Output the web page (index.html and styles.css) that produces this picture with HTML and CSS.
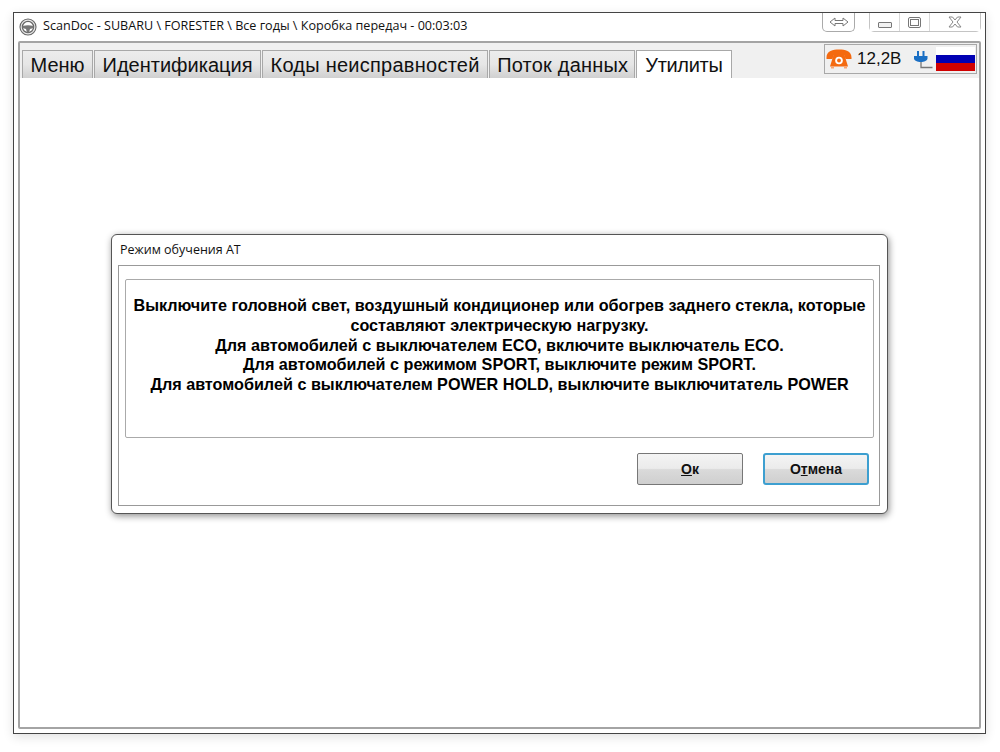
FILE: index.html
```
<!DOCTYPE html>
<html lang="ru">
<head>
<meta charset="utf-8">
<title>ScanDoc</title>
<link rel="stylesheet" href="styles.css">
</head>
<body>
<div class="window">
  <div class="titlebar">
    <svg class="app-icon" width="18" height="18" viewBox="0 0 18 18" fill="none">
      <circle cx="9" cy="9" r="8" stroke="#666" stroke-width="1.100" fill="#e8e8e8"/>
      <circle cx="9" cy="9" r="5.600" stroke="#666" stroke-width="1.300" fill="#fff"/>
      <path d="M3.500 8 Q9 6.300 14.500 8 L14.500 10 L11 11 L10 14.500 H8 L7 11 L3.500 10 Z" fill="#777"/>
    </svg>
    <span class="title-text">ScanDoc - SUBARU \ FORESTER \ Все годы \ Коробка передач - 00:03:03</span>
    <div class="caption-group">
      <button class="cap cap-resize" aria-label="resize">
        <svg width="20" height="12" viewBox="0 0 20 12" fill="none" stroke="#777" stroke-width="1">
          <path d="M1 6 L6 2 V4.500 H14 V2 L19 6 L14 10 V7.500 H6 V10 Z" fill="#fff"/>
        </svg>
      </button>
      <div class="cap-set">
        <button class="cap-btn cap-min" aria-label="minimize"><span class="min-glyph"></span></button>
        <button class="cap-btn cap-max" aria-label="maximize"><span class="max-glyph"></span></button>
        <button class="cap-btn cap-close" aria-label="close">
          <svg width="14" height="12" viewBox="0 0 14 12" fill="#fff" stroke="#888" stroke-width="1">
            <path d="M1 1 H4.500 L7 4 L9.500 1 H13 L9 6 L13 11 H9.500 L7 8 L4.500 11 H1 L5 6 Z"/>
          </svg>
        </button>
      </div>
    </div>
  </div>
  <div class="panel">
    <div class="tabbar">
      <div class="tabs">
        <div class="tab">Меню</div>
        <div class="tab">Идентификация</div>
        <div class="tab tab-wide">Коды неисправностей</div>
        <div class="tab tab-flow">Поток данных</div>
        <div class="tab tab-active">Утилиты</div>
      </div>
      <div class="status">
        <svg class="phone" width="26" height="20" viewBox="0 0 26 20">
          <path d="M0.500 8.500 C0.500 2 7 0.500 13 0.500 C19 0.500 25.500 2 25.500 8.500 V10 L19.500 10 L18.500 6.500 H7.500 L6.500 10 L0.500 10 Z" fill="#f46a10"/>
          <path d="M7.500 6 H18.500 L22 17.500 H4 Z" fill="#f46a10"/>
          <circle cx="13" cy="11.500" r="3.800" fill="#fff"/>
          <circle cx="13" cy="11.500" r="1.900" fill="#f46a10"/>
          <rect x="5" y="17.500" width="3" height="2" fill="#f9a36e"/>
          <rect x="18" y="17.500" width="3" height="2" fill="#f9a36e"/>
        </svg>
        <span class="volt">12,2В</span>
        <svg class="plug" width="19" height="18" viewBox="0 0 19 18" fill="none">
          <path d="M7 10 V16.500 H18.500" stroke="#777" stroke-width="1.300"/>
          <rect x="3" y="0" width="2" height="5" fill="#1a6fc4"/>
          <rect x="8.500" y="0" width="2" height="5" fill="#1a6fc4"/>
          <path d="M0 5 H13.500 V7.500 C13.500 9.500 10 11 6.750 11 C3.500 11 0 9.500 0 7.500 Z" fill="#1a6fc4"/>
        </svg>
        <div class="flag"><i class="f-w"></i><i class="f-b"></i><i class="f-r"></i></div>
      </div>
    </div>
    <div class="content"></div>
  </div>
  <div class="dialog">
    <div class="dialog-title">Режим обучения АТ</div>
    <div class="dialog-body">
      <div class="message">
        Выключите головной свет, воздушный кондиционер или обогрев заднего стекла, которые составляют электрическую нагрузку.<br>
        Для автомобилей с выключателем ECO, включите выключатель ECO.<br>
        Для автомобилей с режимом SPORT, выключите режим SPORT.<br>
        Для автомобилей с выключателем POWER HOLD, выключите выключитатель POWER
      </div>
      <div class="actions">
        <button class="btn"><u>О</u>к</button>
        <button class="btn btn-default">О<u>т</u>мена</button>
      </div>
    </div>
  </div>
</div>
</body>
</html>
```
FILE: styles.css
```
* { box-sizing: border-box; }
html, body { margin: 0; height: 100%; background: #fff; }
body { padding: 12px 14px 18px 13px; font-family: "Liberation Sans", Arial, sans-serif; }
.window {
  position: relative;
  height: 722px;
  border: 1px solid #444;
  background: #fff;
  box-shadow: 0 3px 10px rgba(0,0,0,.12);
  display: flex;
  flex-direction: column;
  padding: 0 4px 4px 4px;
}
.titlebar { height: 28px; display: flex; align-items: flex-start; flex: none; }
.app-icon { margin: 5px 6px 0 1px; flex: none; }
.title-text {
  font-family: "Open Sans", sans-serif;
  font-size: 12.600px;
  line-height: 16px;
  margin-top: 5px;
  color: #111;
  white-space: nowrap;
}
.caption-group { margin-left: auto; display: flex; gap: 14px; align-items: flex-start; }
.cap, .cap-btn { padding: 0; background: #fff; cursor: default; }
.cap {
  width: 33px; height: 19px;
  border: 1px solid #aaa; border-top: 0;
  border-radius: 0 0 5px 5px;
  display: flex; align-items: center; justify-content: center;
}
.cap-set {
  display: flex; height: 19px;
  border: 1px solid #c4c4c4; border-top: 0;
  border-radius: 0 0 5px 5px;
}
.cap-btn {
  border: 0; border-right: 1px solid #d8d8d8; background: #fff;
  display: flex; align-items: center; justify-content: center;
}
.cap-min { width: 30px; }
.cap-max { width: 30px; }
.cap-close { width: 50px; border-right: 0; }
.min-glyph { width: 14px; height: 6px; border: 1px solid #777; border-radius: 1px; background: #f2f2f2; margin-top: 5px; }
.max-glyph { width: 13px; height: 11px; border: 1px solid #777; border-radius: 2px; background: #fff; display: flex; align-items: center; justify-content: center; }
.max-glyph::after { content: ""; width: 7px; height: 5px; border: 1px solid #777; }
.panel {
  flex: 1;
  border: 2px solid #a4a4a4;
  border-radius: 2px;
  display: flex;
  flex-direction: column;
  background: #fff;
}
.tabbar {
  height: 35px;
  background: #f0f0f0;
  display: flex;
  justify-content: space-between;
  align-items: flex-start;
  padding: 1px 2px 0 2px;
  flex: none;
}
.tabs { display: flex; gap: 1px; margin-top: 6px; height: 28px; }
.tab {
  height: 28px;
  padding: 0 7.500px;
  font-size: 20px;
  line-height: 29px;
  color: #111;
  border: 1px solid #a8a8a8;
  border-bottom: 0;
  background: linear-gradient(#ececec, #e6e6e6 50%, #d0d0d0);
  white-space: nowrap;
}
.tab-wide { letter-spacing: .25px; }
.tab-flow { letter-spacing: .2px; padding: 0 6px 0 7px; }
.tab-active { background: #fff; padding: 0 8px; letter-spacing: -.3px; }
.status {
  width: 153px; height: 30px;
  border: 1px solid #a8a8a8;
  background: #f0f0f0;
  display: flex;
  align-items: center;
  padding-left: 1px;
}
.phone { flex: none; }
.volt { font-size: 17px; color: #111; margin-left: 5px; line-height: 22px; }
.plug { flex: none; margin-left: 13px; margin-top: 2px; }
.flag { width: 39px; height: 25px; display: flex; flex-direction: column; margin-left: 3px; }
.flag i { display: block; flex: 1; }
.f-w { background: #fff; }
.f-b { background: #0000b4; }
.f-r { background: #d00000; }
.content { flex: 1; background: #fff; }
.dialog {
  position: absolute;
  left: 97px; top: 221px;
  width: 777px; height: 280px;
  background: #fff;
  border: 1px solid #555;
  border-radius: 6px;
  box-shadow: 1px 2px 7px rgba(0,0,0,.45);
  padding: 0 7px 7px 6px;
  display: flex;
  flex-direction: column;
}
.dialog-title { height: 30px; padding-left: 2px; font-family: "Open Sans", sans-serif; font-size: 12.500px; line-height: 30px; color: #111; flex: none; }
.dialog-body {
  flex: 1;
  border: 1px solid #999;
  padding: 13px 5px 0 6px;
  display: flex;
  flex-direction: column;
}
.message {
  height: 159px;
  border: 1px solid #aaa;
  border-radius: 2px;
  padding: 16px 4px 0;
  font-size: 16.200px;
  font-weight: bold;
  line-height: 19.750px;
  text-align: center;
  color: #000;
  flex: none;
}
.actions { display: flex; justify-content: flex-end; gap: 20px; padding: 15px 5px 0 0; }
.btn {
  width: 106px; height: 32px;
  border: 1px solid #777;
  border-radius: 2px;
  background: linear-gradient(#f4f4f4, #ebebeb 48%, #dadada 52%, #cfcfcf);
  font-family: "Liberation Sans", sans-serif;
  font-size: 14px;
  font-weight: bold;
  color: #111;
  padding: 0;
}
.btn-default { border: 2px solid #3d9fd0; border-radius: 3px; }
```
